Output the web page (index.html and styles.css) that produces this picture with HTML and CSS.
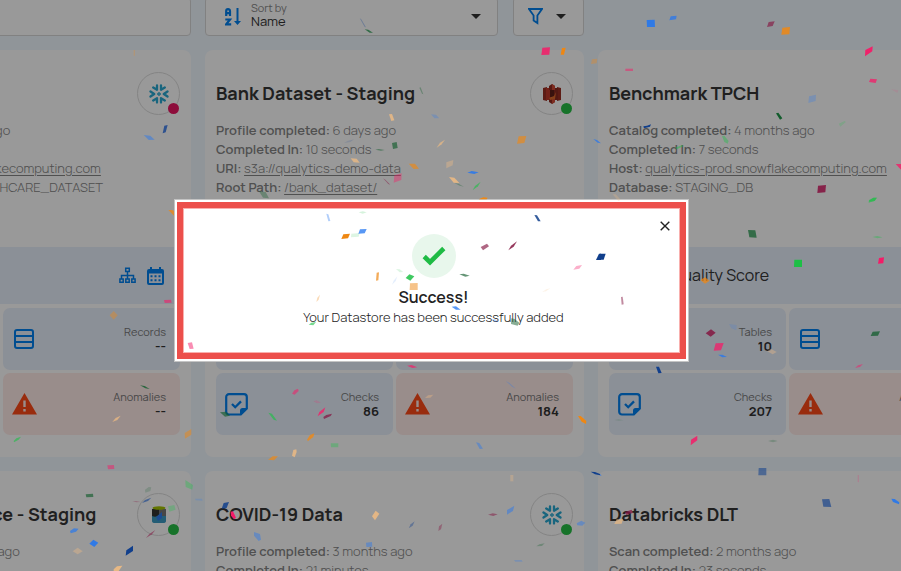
FILE: index.html
```html
<!DOCTYPE html>
<html lang="en">
<head>
<meta charset="utf-8">
<title>Datastores</title>
<link rel="stylesheet" href="styles.css">
</head>
<body>
<svg class="sprite" aria-hidden="true">
  <symbol id="flake" viewBox="-10 -10 20 20"><g fill="none" stroke="#29a9d2" stroke-width="2.300" stroke-linecap="round" stroke-linejoin="round"><path d="M0-1.400 1.400 0 0 1.400-1.400 0Z" stroke-width="1.200"/><path d="M-2-8.500V-4.200L-5.800-6.500M2-8.500V-4.200L5.800-6.500M-2 8.500V4.200L-5.800 6.500M2 8.500V4.200L5.800 6.500M-8.500-2.500-4.800 0-8.500 2.500M8.500-2.500 4.800 0 8.500 2.500"/></g></symbol>
  <symbol id="list" viewBox="0 0 20 20"><path d="M3 1h14a2 2 0 0 1 2 2v14a2 2 0 0 1-2 2H3a2 2 0 0 1-2-2V3a2 2 0 0 1 2-2ZM1 7h18M1 13h18" fill="none" stroke="currentColor" stroke-width="2"/></symbol>
  <symbol id="warn" viewBox="0 0 25 22"><path fill="currentColor" fill-rule="evenodd" d="M12.500 0 25 21.500H0ZM11.300 7.500v6.500h2.400V7.500ZM11.300 16v2.500h2.400V16Z"/></symbol>
  <symbol id="check" viewBox="0 0 23 23"><path d="M4 1.200h15a2.800 2.800 0 0 1 2.800 2.800v11.500l-6 6H4a2.800 2.800 0 0 1-2.800-2.800V4A2.800 2.800 0 0 1 4 1.200Z" fill="none" stroke="currentColor" stroke-width="2.200"/><path d="M15 22v-4.500a2.500 2.500 0 0 1 2.500-2.500H22v1l-6 6Z" fill="currentColor"/><path d="m7 11 3.200 3.200L16 8.400" fill="none" stroke="currentColor" stroke-width="2.300"/></symbol>
  <symbol id="tree" viewBox="0 0 17 17"><path d="M6.700 1.200h3.600v3.300H6.700ZM.9 12h3.300v3.300H.9ZM6.800 12h3.400v3.300H6.800ZM12.800 12h3.300v3.300h-3.300ZM8.500 4.500V12M2.500 12V8.500h12V12" fill="none" stroke="currentColor" stroke-width="1.500"/></symbol>
  <symbol id="cal" viewBox="0 0 17 18"><path fill="currentColor" fill-rule="evenodd" d="M3 0h2v2h7V0h2v2h1a2 2 0 0 1 2 2v12a2 2 0 0 1-2 2H2a2 2 0 0 1-2-2V4a2 2 0 0 1 2-2h1ZM2 6.500V16h13V6.500ZM3.500 8.300h2v2h-2Zm4 0h2v2h-2Zm4 0h2v2h-2Zm-8 4h2v2h-2Zm4 0h2v2h-2Zm4 0h2v2h-2Z"/></symbol>
</svg>
<main class="page">
  <form class="columns toolbar">
    <input class="field" type="search" aria-label="Search">
    <div class="tools">
      <div class="field sort">
        <svg width="17" height="18" viewBox="0 0 17 18" fill="none" stroke="currentColor" stroke-width="2.200"><path d="M1.200 8V3q0-1.800 1.800-1.800T5 3v5M1 5.200h4M.3 11.500H5L1.200 16.300h5"/><path d="M12.500 0v14.500" stroke-width="2"/><path d="M9 13h7L12.500 17Z" fill="currentColor" stroke="none"/></svg>
        <div class="sort-text">
          <label for="sort">Sort by</label>
          <select id="sort"><option>Name</option></select>
        </div>
        <span class="caret"></span>
      </div>
      <button class="field filter" type="button" aria-label="Filter">
        <svg width="15" height="17" viewBox="0 0 15 17" fill="none" stroke="currentColor" stroke-width="1.800"><path d="M1 1h13L9.400 7.500V15L5.600 12.500v-5Z"/></svg>
        <span class="caret"></span>
      </button>
    </div>
  </form>

  <div class="columns">
    <article class="card">
      <header><h2>Healthcare Data</h2><span class="source failed"><svg width="20" height="20"><use href="#flake"/></svg></span></header>
      <div class="meta">
        <p><b>Scan completed:</b> 2 months ago</p>
        <p><b>Completed In:</b> 7 seconds</p>
        <p><b>Host:</b> <a href="#">qualytics-prod.snowflakecomputing.com</a></p>
        <p><b>Database:</b> STAGE_DB_HEALTHCARE_DATASET</p>
      </div>
      <div class="quality"><span class="score"></span><span>Quality Score</span><span class="links"><svg width="17" height="17"><use href="#tree"/></svg><svg width="17" height="18"><use href="#cal"/></svg></span></div>
      <div class="tiles">
        <div class="tile"><svg width="20" height="20"><use href="#list"/></svg></div>
        <div class="tile"><svg width="20" height="20"><use href="#list"/></svg><p>Records<b>--</b></p></div>
        <div class="tile"><svg width="23" height="23"><use href="#check"/></svg></div>
        <div class="tile alert"><svg width="25" height="22"><use href="#warn"/></svg><p>Anomalies<b>--</b></p></div>
      </div>
    </article>

    <article class="card">
      <header><h2>Bank Dataset - Staging</h2><span class="source"><svg width="18" height="20" viewBox="0 0 18 20"><path fill="#9c2f24" d="M0 4l4-1v14l-4-1ZM18 4l-4-1v14l4-1Z"/><path fill="#c0392b" d="M3 4h5v12H3Z"/><path fill="#8a2a20" d="M10 4h5v12h-5Z"/><path fill="#912a20" d="M6 2l3-2 3 2v4H6ZM6 14h6v4l-3 2-3-2Z"/><path fill="#d24a36" d="M9 0l3 2v4H9ZM9 14h3v4l-3 2Z"/><path fill="#5e1f18" d="M7 6h4v7H7Z"/><path fill="#dd6a2a" d="m6 14 5-2 2-4-1 7-5 1Z"/></svg></span></header>
      <div class="meta">
        <p><b>Profile completed:</b> 6 days ago</p>
        <p><b>Completed In:</b> 10 seconds</p>
        <p><b>URI:</b> <a href="#">s3a://qualytics-demo-data</a></p>
        <p><b>Root Path:</b> <a href="#">/bank_dataset/</a></p>
      </div>
      <div class="quality"></div>
      <div class="tiles">
        <div class="tile"></div>
        <div class="tile"></div>
        <div class="tile"><svg width="23" height="23"><use href="#check"/></svg><p>Checks<b>86</b></p></div>
        <div class="tile alert"><svg width="25" height="22"><use href="#warn"/></svg><p>Anomalies<b>184</b></p></div>
      </div>
    </article>

    <article class="card">
      <header><h2>Benchmark TPCH</h2></header>
      <div class="meta">
        <p><b>Catalog completed:</b> 4 months ago</p>
        <p><b>Completed In:</b> 7 seconds</p>
        <p><b>Host:</b> <a href="#">qualytics-prod.snowflakecomputing.com</a></p>
        <p><b>Database:</b> STAGING_DB</p>
      </div>
      <div class="quality"><span class="score"></span><span>Quality Score</span></div>
      <div class="tiles">
        <div class="tile"><svg width="20" height="20"><use href="#list"/></svg><p>Tables<b>10</b></p></div>
        <div class="tile"><svg width="20" height="20"><use href="#list"/></svg></div>
        <div class="tile"><svg width="23" height="23"><use href="#check"/></svg><p>Checks<b>207</b></p></div>
        <div class="tile alert"><svg width="25" height="22"><use href="#warn"/></svg><p>Anomalies<b>12</b></p></div>
      </div>
    </article>

    <article class="card">
      <header><h2>Consolidated Balance - Staging</h2><span class="source"><svg width="16" height="18" viewBox="0 0 16 18"><path fill="#3c9cc4" d="M1 3h14v12q0 2-3 2H4q-3 0-3-2Z"/><path fill="#777" d="M8 3h7v7H8Z"/><path fill="#333" d="M1 3h7v6q-3 3-7 1Z"/><path fill="#2f7cf0" d="M5 11l6-5v6l-4 3Z"/><ellipse cx="8" cy="2" rx="6.500" ry="1.800" fill="#a4c400"/></svg></span></header>
      <div class="meta">
        <p><b>Profile completed:</b> 2 months ago</p>
        <p><b>Completed In:</b> 9 seconds</p>
      </div>
    </article>

    <article class="card">
      <header><h2>COVID-19 Data</h2><span class="source"><svg width="20" height="20"><use href="#flake"/></svg></span></header>
      <div class="meta">
        <p><b>Profile completed:</b> 3 months ago</p>
        <p><b>Completed In:</b> 21 minutes</p>
      </div>
    </article>

    <article class="card">
      <header><h2>Databricks DLT</h2></header>
      <div class="meta">
        <p><b>Scan completed:</b> 2 months ago</p>
        <p><b>Completed In:</b> 23 seconds</p>
      </div>
    </article>
  </div>
</main>

<div class="backdrop">
  <section class="frame" role="dialog" aria-labelledby="dialog-title">
    <div class="dialog">
      <button class="close" type="button" aria-label="Close"><svg width="10" height="10" viewBox="0 0 10 10" stroke="currentColor" stroke-width="1.400"><path d="m.7.7 8.600 8.600M9.300.7.7 9.300"/></svg></button>
      <span class="done"><svg width="24" height="20" viewBox="0 0 24 20" fill="none" stroke="#1fbb45" stroke-width="4.600"><path d="m2.200 10.500 5.800 5.700L21.800 2.500"/></svg></span>
      <h1 id="dialog-title">Success!</h1>
      <p>Your Datastore has been successfully added</p>
    </div>
  </section>
</div>

<svg class="confetti" width="901" height="571" viewBox="0 0 901 571" aria-hidden="true">
  <g transform="scale(.33333)">
    <path class="b" opacity=".45" d="M431 405l20 2 13 12-18 1z"/><path class="n" opacity=".8" d="M493 377l10-2-6 22-9 3z"/>
    <path class="d" opacity=".35" d="M777 574l20 2 10 19-18-2z"/><path class="o" opacity=".25" d="M401 150h4v17h-4z"/>
  </g>
  <g transform="translate(300) scale(.33333)">
    <path class="n" opacity=".3" d="M179 55l5 3 14 24-4-1z"/><path class="d" opacity=".75" d="M194 88l11 1 14 9-10 0z"/>
    <path class="p" opacity=".85" d="M727 143l23-1-2 22-24 1z"/><path class="o" d="M786 144l11-1-5 21-10 0z"/><path class="o" opacity=".35" d="M876 178l16-2-2 14-17 2z"/>
    <path class="d" opacity=".35" d="M358 263l4-1 8 21-4-2z"/><path class="l" opacity=".75" d="M267 343l9-1 7 19-9 2z"/><path class="b" opacity=".25" d="M393 343l15 1 10 11-15 0z"/>
    <path class="n" opacity=".15" d="M132 429l12-7 19-4-12 8z"/><path class="d" opacity=".65" d="M276 429l14-3 3 18-14 3z"/><path class="d" opacity=".5" d="M226 449l10-2 18 3-11 2z"/>
    <path class="l" opacity=".65" d="M410 443l10-15 15-9-10 14z"/><path class="o" opacity=".65" d="M656 409l23-1-6 21-22 2z"/><path class="b" opacity=".7" d="M880 417l11 3 12 10-10-2z"/>
    <path class="l" opacity=".7" d="M152 475l18 1 9 12-18-1z"/><path class="o" opacity=".65" d="M326 491l19 0 12 15-16 1z"/><path class="l" opacity=".35" d="M439 487l21-7-2 16-19 9z"/>
    <path class="b" opacity=".8" d="M502 518l13-5 21 4-13 5z"/><path class="p" opacity=".4" d="M283 526l22-6-1 20-23 8z"/><path class="m" opacity=".5" d="M249 535l7 4 15 15-6-2z"/>
    <path class="l" opacity=".8" d="M447 531l16 2 15 16-17-1z"/><path class="d" opacity=".3" d="M463 549l13 2 16 9-13-3z"/><path class="g" opacity=".6" d="M518 571l7-13 17-13-8 14z"/>
    <path class="o" d="M536 598l14-6 13 1-3 5z"/>
  </g>
  <g transform="translate(600) scale(.33333)">
    <path class="b" opacity=".85" d="M140 60l24-1 1 22-24 0z"/><path class="b" opacity=".7" d="M212 49l18-2-2 11-20 3z"/><path class="m" opacity=".65" d="M506 66l18-2-6 14-17 3z"/>
    <path class="o" opacity=".85" d="M547 83l23-2-2 22-24 1z"/><path class="p" opacity=".95" d="M796 150l22-11-1 15-22 15z"/><path class="p" opacity=".5" d="M76 206h23v7H76z"/>
    <path class="p" opacity=".75" d="M811 236l20 2-4 11-20-3z"/><path class="b" opacity=".25" d="M627 289l21-5-1 19-22 6z"/><path class="d" d="M528 340l7-2 12 17-7 4z"/>
    <path class="n" d="M130 379l11-2 12-4-3 7-18 5z"/><path class="g" opacity=".2" d="M716 371l19-9 2 5-16 13z"/><path class="g" opacity=".4" d="M366 408l7-1 13 16-3 8-10-5z"/><path class="g" opacity=".45" d="M225 443l22-8 4 3-20 10z"/>
    <path class="p" opacity=".8" d="M887 492h16v17z"/><path class="m" opacity=".9" d="M654 557l24-2-2 22-24 2z"/><path class="g" opacity=".65" d="M807 600l14-7 9 0-5 9-19 6z"/><path class="l" opacity=".25" d="M38 583l9 0 15 16-7 4z"/>
    <path class="p" opacity=".1" d="M873 268l22 2-3 9z"/>
  </g>
  <g transform="translate(0 190) scale(.33333)">
    <path class="o" opacity=".75" d="M505 60h12l5 3v14z"/><path class="p" opacity=".6" d="M492 330l21-1 2 9-21 1z"/><path class="o" opacity=".4" d="M341 363l12 13-12 13-12-13z"/><path class="p" opacity=".5" d="M563 459l13-2 5 19-12 1z"/>
    <path class="d" opacity=".8" d="M420 586l14 2 15 9-13-2z"/>
  </g>
  <g transform="translate(300 190) scale(.33333)">
    <path class="b" opacity=".35" d="M79 71l6 2 6 20-6 1z"/><path class="g" opacity=".18" d="M176 67l12-3 12 3-12 4z"/><path class="o" d="M130 133l20-2-6 14-20 2z"/><path class="g" opacity=".15" d="M154 131l25-2-3 11-23 2z"/><path class="b" opacity=".75" d="M180 118l20-1-6 13-19 1z"/>
    <path class="n" opacity=".85" d="M703 75l8 1 11 18-8 0z"/><path class="m" opacity=".65" d="M542 171l19-10 6 8-18 12z"/><path class="m" opacity=".85" d="M625 181l8-14 18-13-10 16z"/><path class="n" d="M888 210l9-19h6v19z"/>
    <path class="p" opacity=".35" d="M820 239l9-11 17-3-8 11z"/><path class="d" opacity=".65" d="M478 253l13-2 18 6-13 3z"/><path class="g" opacity=".85" d="M317 264l11-11 15 6-12 13z"/><path class="g" opacity=".15" d="M288 237l11 1 11 8-11 1z"/>
    <path class="o" opacity=".7" d="M230 248l7-1-2 24-7 1z"/><path class="b" opacity=".12" d="M276 284l5-12 11-13-5 14z"/><path class="o" opacity=".5" d="M330 280l23-1v21h-24z"/><path class="o" opacity=".3" d="M49 336l3-13 8-9-4 15z"/><path class="o" opacity=".1" d="M726 306l13-8 12-3-13 9z"/>
    <path class="b" opacity=".75" d="M455 350l13-1 14 10-14 0z"/><path class="g" opacity=".6" d="M26 404l8-6 14-2-8 10z"/><path class="b" opacity=".25" d="M573 388l12-1 12 8-14 1z"/><path class="d" opacity=".5" d="M634 385l10 2 14 11-5 9-20-5z"/>
    <path class="p" opacity=".7" d="M321 527l14-2 17 7-15 2z"/><path class="b" opacity=".25" d="M617 573l11 5 20 18-12-6z"/>
  </g>
  <g transform="translate(600 190) scale(.33333)">
    <path class="n" d="M0 191h17l-6 18H0z"/><path class="m" opacity=".5" d="M63 321l5-1 3 23-6 1z"/><path class="o" opacity=".75" d="M301 270l14-8 14 10-14 9z"/><path class="g" opacity=".5" d="M806 34l13-11 13 0-10 11z"/>
    <path class="d" opacity=".75" d="M444 120l22 1 4 22-22-1z"/><path class="g" opacity=".4" d="M817 141l15-3 16 4-15 3z"/><path class="g" d="M583 209h23v22h-24z"/><path class="p" d="M837 204l15-2-2 18-16 1z"/>
    <path class="m" opacity=".85" d="M317 430l16-12 14 10-15 12z"/><path class="b" opacity=".15" d="M387 402l23 3-1 16-15-6z"/><path class="p" opacity=".75" d="M347 460l24-1-8 22-22 1z"/><path class="b" opacity=".75" d="M354 494l13 0 14 7-14 1z"/>
    <path class="l" opacity=".35" d="M502 484l10-8 18 10-12 7z"/><path class="d" opacity=".75" d="M818 425l22-1-6 13-22 1z"/><path class="p" opacity=".5" d="M765 534l9-8 15-4-9 9z"/><path class="n" d="M168 530l9 0 8 19-10 1z"/>
  </g>
  <g transform="translate(0 371) scale(.33333)">
    <path class="l" opacity=".7" d="M337 153l10-12 15-7-10 13z"/><path class="g" opacity=".6" d="M41 210l8-8 14-5-7 9-14 8z"/><path class="o" opacity=".5" d="M554 186l20-12v17l-19 12z"/><path class="p" opacity=".5" d="M322 283l20-1 1 12-19 1z"/><path class="d" opacity=".65" d="M257 370l22-2 1 10-21 1z"/>
    <path class="g" opacity=".35" d="M556 327l23 15-2 14-20-8z"/><path class="d" opacity=".2" d="M435 356l11-8 8 1-3 11-15 5z"/><path class="n" opacity=".6" d="M426 396l9-9 19-7-10 10z"/><path class="m" opacity=".3" d="M397 391l12-1 13 3-13 1z"/><path class="g" opacity=".3" d="M504 406l19-4 4 14-19 6z"/>
    <path class="m" opacity=".55" d="M438 501l10-12 18-12-10 13z"/><path class="b" opacity=".65" d="M210 480l12-8 14 1-8 9-16 5z"/><path class="b" opacity=".85" d="M268 518l12-12 15 9-12 13z"/><path class="l" opacity=".35" d="M218 541l15-11 15 11-15 9z"/>
    <path class="n" d="M379 538l20-14v16l-22 14z"/><path class="l" opacity=".85" d="M341 595l10-9 16-2-11 16h-15z"/><path class="d" opacity=".65" d="M660 124l18-2 12 12-15 3z"/><path class="g" opacity=".65" d="M805 125l11 3 15 21-10-3z"/><path class="p" opacity=".55" d="M876 68l7-10 11-5 2 7-12 11z"/>
    <path class="l" opacity=".75" d="M876 254l4-17 9-2 1 8-6 16z"/><path class="o" opacity=".7" d="M804 266l14-10 16 0-12 12z"/><path class="b" opacity=".2" d="M585 383l21 0 2 6-21-1z"/><path class="n" opacity=".85" d="M671 396l16-3-7 18-15 2z"/>
    <path class="p" d="M692 422l7-1 9 19-6 5-9-11z"/><path class="b" opacity=".4" d="M762 483l18 6 3 17-7 4-14-16z"/>
  </g>
  <g transform="translate(300 371) scale(.33333)">
    <path class="p" opacity=".8" d="M53 136l5-13 18-14-5 14z"/><path class="m" opacity=".75" d="M70 138l9-6 17-4-4 7-20 9z"/><path class="p" opacity=".18" d="M40 91l10-3 13 7-12 2z"/><path class="l" opacity=".35" d="M375 81l9-8 16-2-9 9z"/>
    <path class="o" opacity=".8" d="M22 205l8-13 13-5-3 11-17 13z"/><path class="g" opacity=".35" d="M92 217h23v12H93z"/><path class="b" opacity=".4" d="M528 214l10 2 11 17-10 1z"/><path class="o" d="M834 135l8 0 17 15-1 9-13-7z"/><path class="n" d="M872 302l13 1 15 6v4l-15-3z"/>
    <path class="l" opacity=".8" d="M216 436l11-17 11 9-13 20z"/><path class="b" opacity=".45" d="M621 417l22-13-4 16-18 11z"/><path class="m" opacity=".5" d="M564 431l14-4 15 3-13 5z"/><path class="n" opacity=".4" d="M326 472l6-12 12-9-6 13z"/><path class="m" opacity=".4" d="M415 480l2-14 10-8-4 17z"/>
    <path class="b" opacity=".4" d="M198 515l18-2 1 14-18 1z"/><path class="b" opacity=".4" d="M830 457l14-8 12 6-9 9-15-1z"/><path class="d" opacity=".3" d="M709 526l9-6 16-3-8 8z"/><path class="b" opacity=".25" d="M642 567l23 0 3 5-22 0z"/><path class="l" opacity=".3" d="M631 312h9v19h-9z"/>
  </g>
  <g transform="translate(600 371) scale(.33333)">
    <path class="p" opacity=".85" d="M273 206l19-12 0 14-20 15z"/><path class="d" opacity=".25" d="M504 210l15-4 14 4-14 4z"/><path class="n" opacity=".55" d="M476 291h23v22h-24z"/><path class="n" opacity=".65" d="M666 385l22-1 6 24-24-1z"/><path class="b" opacity=".85" d="M874 383l10 1 14 10-1 6-18-7z"/>
    <path class="m" opacity=".75" d="M75 423l20-7 3 10-20 6z"/><path class="l" opacity=".65" d="M50 445h19l-4 13-22 1z"/><path class="d" opacity=".12" d="M42 147l14-3 15 4-14 2z"/><path class="p" opacity=".18" d="M773 312h4v22h-4z"/><path class="b" opacity=".6" d="M0 308l5 6H0z"/>
  </g>
</svg>
</body>
</html>
```
FILE: styles.css
```css
* { box-sizing: border-box; }
body {
  margin: 0;
  height: 100vh;
  overflow: hidden;
  background: #f0f8ff;
  color: #363636;
  font-family: Manrope, Inter, "Liberation Sans", sans-serif;
  font-size: 13px;
  line-height: 19px;
  font-variant-ligatures: none;
}
h1, h2, p { margin: 0; }
svg { flex: none; }
.sprite { position: absolute; width: 0; height: 0; }

/* The card grid is wider than the window and scrolled to its middle. */
.page { margin: -3px -76px 0 -188px; }
.columns {
  display: grid;
  grid-template-columns: repeat(3, minmax(0, 1fr));
  gap: 14px;
}
.toolbar { margin-bottom: 14px; }
.tools { display: grid; grid-template-columns: 1fr 71px; gap: 15px; }
.field {
  height: 39px;
  padding: 0;
  border: 1px solid #d8d8d8;
  border-radius: 4px;
  background: #fff;
  color: #0080f0;
  font: inherit;
}
.sort { display: flex; align-items: center; gap: 9px; padding: 0 16px 0 19px; }
.sort-text { display: flex; flex: 1; flex-direction: column; padding-bottom: 3px; }
.sort-text label { color: #888; font-size: 11px; line-height: 12px; }
.sort-text select {
  appearance: none;
  height: 14px;
  padding: 0;
  border: 0;
  background: none;
  color: #333;
  font: inherit;
  line-height: 14px;
}
.caret {
  border: 5px solid transparent;
  border-top-color: #333;
  border-bottom-width: 0;
}
.filter { display: flex; align-items: center; justify-content: center; gap: 13px; padding-right: 3px; }

.card {
  min-height: 407px;
  padding: 22px 11px;
  border-radius: 8px;
  background: #fff;
  white-space: nowrap;
}
.card header { display: flex; align-items: center; justify-content: space-between; height: 43px; }
h2 { font-size: 18px; font-weight: 700; line-height: 22px; }
.card h2 { padding-bottom: 2px; }
.source {
  position: relative;
  display: grid;
  place-items: center;
  width: 43px;
  height: 43px;
  border: 1px solid #dcdcdc;
  border-radius: 50%;
}
.source::after {
  content: "";
  position: absolute;
  right: 0;
  bottom: 0;
  width: 11px;
  height: 11px;
  border-radius: 50%;
  background: #27c046;
}
.source.failed::after { background: #ec1763; }
.meta { min-height: 126px; padding-top: 6px; color: #858585; font-weight: 300; }
.meta b { font-weight: 600; }
.meta a { color: inherit; text-underline-offset: 2px; }
.quality {
  display: flex;
  align-items: center;
  gap: 18px;
  height: 57px;
  margin: 6px -11px 4px;
  padding: 0 27px 0 11px;
  background: #e8f0fc;
  font-size: 16px;
}
.score { width: 44px; }
.links { display: flex; gap: 11px; margin-left: auto; color: #0080f0; }
.tiles { display: grid; grid-template-columns: 1fr 1fr; gap: 3px; }
.tile {
  display: flex;
  align-items: center;
  justify-content: space-between;
  height: 62px;
  padding: 0 14px 0 11px;
  border-radius: 7px;
  background: #e8f0fc;
  color: #0080f0;
}
.tile:nth-child(n+3) { padding-left: 9px; }
.tile p { color: #777; font-size: 11px; line-height: 15px; text-align: right; }
.tile b { display: block; color: #333; font-size: 13px; }
.tile.alert { background: #ffebe8; color: #ff4a18; }

.backdrop {
  position: fixed;
  inset: 0;
  display: grid;
  place-items: center;
  padding: 0 38px 10px 0;
  background: rgba(0, 0, 0, .4);
}
.frame {
  width: 100%;
  max-width: 515px;
  padding: 2px;
  border: 1px solid #c4c4c4;
  background: #fff;
}
.dialog {
  position: relative;
  display: flex;
  flex-direction: column;
  align-items: center;
  min-height: 157px;
  padding: 26px 0 22px 4px;
  border: 6px solid #ec4f4b;
  outline: 1px solid #f9b0ae;
  outline-offset: -7px;
  background: #fff;
  color: #222;
  font-weight: 300;
}
.close {
  position: absolute;
  top: 12px;
  right: 9px;
  display: grid;
  place-items: center;
  width: 12px;
  height: 12px;
  padding: 0;
  border: 0;
  background: none;
  color: #222;
}
.done {
  display: grid;
  place-items: center;
  width: 44px;
  height: 44px;
  border-radius: 50%;
  background: #e8f7ec;
}
h1 { margin-top: 8px; font-size: 16px; font-weight: 600; line-height: 22px; }

.confetti { position: fixed; top: 0; left: 0; pointer-events: none; }
.b { fill: #1f74f2; }
.n { fill: #113f8c; }
.g { fill: #1dbf45; }
.d { fill: #125c2c; }
.p { fill: #f41b67; }
.m { fill: #841641; }
.o { fill: #ee8713; }
.l { fill: #f5bd80; }
```
